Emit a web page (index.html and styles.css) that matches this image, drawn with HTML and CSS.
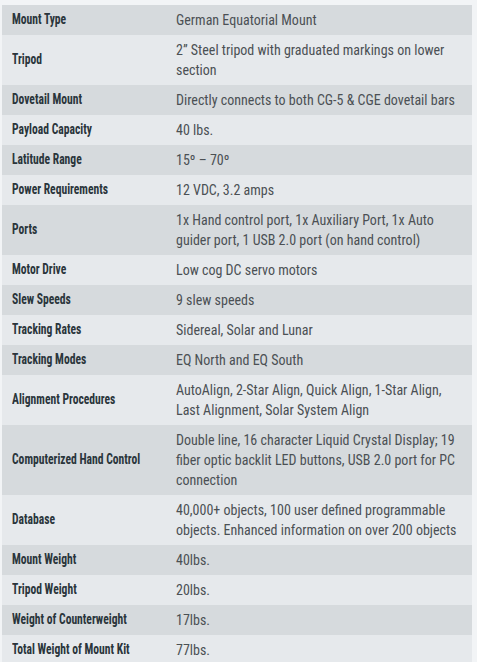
FILE: index.html
```html
<!DOCTYPE html>
<html lang="en">
<head>
<meta charset="utf-8">
<title>Mount Specifications</title>
<link rel="stylesheet" href="styles.css">
</head>
<body>
<table class="specs">
  <tbody>
    <tr><th><span class="lbl">Mount Type</span></th><td>German Equatorial Mount</td></tr>
    <tr><th><span class="lbl">Tripod</span></th><td>2” Steel tripod with graduated markings on lower section</td></tr>
    <tr><th><span class="lbl">Dovetail Mount</span></th><td>Directly connects to both CG-5 &amp; CGE dovetail bars</td></tr>
    <tr><th><span class="lbl">Payload Capacity</span></th><td>40 lbs.</td></tr>
    <tr><th><span class="lbl">Latitude Range</span></th><td>15º – 70º</td></tr>
    <tr><th><span class="lbl">Power Requirements</span></th><td>12 VDC, 3.2 amps</td></tr>
    <tr><th><span class="lbl">Ports</span></th><td>1x Hand control port, 1x Auxiliary Port, 1x Auto guider port, 1 USB 2.0 port (on hand control)</td></tr>
    <tr><th><span class="lbl">Motor Drive</span></th><td>Low cog DC servo motors</td></tr>
    <tr><th><span class="lbl">Slew Speeds</span></th><td>9 slew speeds</td></tr>
    <tr><th><span class="lbl">Tracking Rates</span></th><td>Sidereal, Solar and Lunar</td></tr>
    <tr><th><span class="lbl">Tracking Modes</span></th><td>EQ North and EQ South</td></tr>
    <tr><th><span class="lbl">Alignment Procedures</span></th><td>AutoAlign, 2-Star Align, Quick Align, 1-Star Align, Last Alignment, Solar System Align</td></tr>
    <tr><th><span class="lbl">Computerized Hand Control</span></th><td>Double line, 16 character Liquid Crystal Display; 19 fiber optic backlit LED buttons, USB 2.0 port for PC connection</td></tr>
    <tr><th><span class="lbl">Database</span></th><td>40,000+ objects, 100 user defined programmable objects. Enhanced information on over 200 objects</td></tr>
    <tr><th><span class="lbl">Mount Weight</span></th><td>40lbs.</td></tr>
    <tr><th><span class="lbl">Tripod Weight</span></th><td>20lbs.</td></tr>
    <tr><th><span class="lbl">Weight of Counterweight</span></th><td>17lbs.</td></tr>
    <tr><th><span class="lbl">Total Weight of Mount Kit</span></th><td>77lbs.</td></tr>
  </tbody>
</table>
</body>
</html>
```
FILE: styles.css
```css
html, body {
  margin: 0;
  padding: 0;
}
body {
  background: #f2f4f6;
  padding: 5px 0 0 2px;
}
.specs {
  width: 470px;
  border-collapse: collapse;
  border-spacing: 0;
  table-layout: fixed;
}
.specs th,
.specs td {
  padding: 5px 10px;
  line-height: 20px;
  vertical-align: middle;
  text-align: left;
}
.specs th {
  width: 144px;
  font-family: "Roboto", sans-serif;
  font-stretch: 75%;
  font-weight: bold;
  font-size: 14.5px;
  color: #2a353b;
}
.lbl {
  display: inline-block;
  white-space: nowrap;
  transform: scaleX(0.8);
  transform-origin: left center;
}
.specs td {
  font-family: "Roboto", sans-serif;
  font-stretch: 75%;
  font-size: 14px;
  color: #4b5054;
}
.specs tr:nth-child(odd) {
  background: #d6dadd;
}
.specs tr:nth-child(even) {
  background: #e6e9ec;
}
```
